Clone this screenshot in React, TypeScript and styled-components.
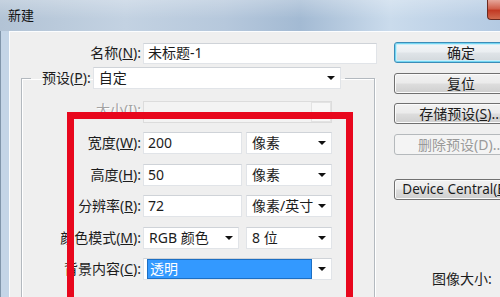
import React from 'react';
import styled, { createGlobalStyle, css } from 'styled-components';

const GlobalStyle = createGlobalStyle`
  html, body {
    margin: 0;
    padding: 0;
    background: #efefef;
    overflow: hidden;
  }
  body {
    font-family: "Noto Sans", "Noto Sans CJK SC", sans-serif;
    font-size: 14px;
    color: #1c1c1c;
  }
`;

const Window = styled.div`
  position: relative;
  width: 500px;
  height: 297px;
  overflow: hidden;
  display: flex;
  flex-direction: column;
`;

const TitleBar = styled.div`
  height: 31px;
  flex: none;
  display: flex;
  align-items: flex-start;
  padding-left: 8px;
  font-size: 13px;
  line-height: 31px;
  color: #111;
  background:
    linear-gradient(180deg, rgba(255, 255, 255, 0.25), rgba(255, 255, 255, 0) 60%),
    linear-gradient(90deg, #b2c3d5 0%, #c3d2e2 25%, #b6c8dc 45%, #a3bad3 60%, #cadbec 78%, #b4cae2 100%);
`;

const TitleText = styled.span`
  flex: 1;
`;

const CloseButton = styled.div`
  flex: none;
  width: 12px;
  height: 19px;
  border: 1px solid #6b2a20;
  border-top: none;
  border-right: none;
  border-radius: 0 0 0 4px;
  background: linear-gradient(180deg, #e6a69a 0%, #d0604c 45%, #c23a24 55%, #d06a4e 100%);
`;

const Frame = styled.div`
  flex: 1;
  display: flex;
  border-left: 1px solid #8196ab;
`;

const Body = styled.div`
  flex: 1;
  display: flex;
  padding-top: 11px;
  border-left: 8px solid #c4d5e7;
  box-shadow: inset 1px 1px 0 #fbfdff;
  background: #efefef;
`;

const FormPane = styled.div`
  flex: none;
  width: 375px;
  display: flex;
  flex-direction: column;
`;

const Row = styled.div<{ $label: number }>`
  display: grid;
  grid-template-columns: ${(p) => p.$label}px auto;
  column-gap: 2px;
  align-items: center;
  height: 22px;
`;

const Label = styled.label<{ $disabled?: boolean }>`
  text-align: right;
  white-space: nowrap;
  line-height: 20px;
  color: ${(p) => (p.$disabled ? '#a3a3a3' : '#1c1c1c')};
  ${(p) =>
    p.$disabled &&
    css`
      margin-top: -5px;
      text-shadow: 1px 1px 0 #ffffff;
    `}
`;

const TextBox = styled.div<{ $w: number; $h?: number }>`
  box-sizing: border-box;
  width: ${(p) => p.$w}px;
  height: ${(p) => p.$h ?? 22}px;
  padding: 0 4px;
  display: flex;
  align-items: center;
  background: #ffffff;
  border: 1px solid #e1e4e8;
  border-top-color: #cfd3d8;
  line-height: 20px;
  white-space: nowrap;
`;

const SelectBox = styled(TextBox)<{ $disabled?: boolean }>`
  padding: 0 5px 0 3px;
  gap: 4px;
  ${(p) =>
    p.$disabled &&
    css`
      background: #f3f3f3;
      border-color: #dcdcdc;
      padding-right: 0;
    `}
`;

const SelectValue = styled.span<{ $selected?: boolean }>`
  flex: 1;
  height: 18px;
  line-height: 18px;
  padding-left: 2px;
  ${(p) =>
    p.$selected &&
    css`
      background: #3399ff;
      color: #ffffff;
      border: 1px solid #1c6fc4;
      margin-right: 2px;
    `}
`;

const Arrow = styled.span`
  flex: none;
  width: 0;
  height: 0;
  border-left: 4px solid transparent;
  border-right: 4px solid transparent;
  border-top: 4px solid #111;
`;

const DisabledDrop = styled.span`
  flex: none;
  box-sizing: border-box;
  width: 20px;
  height: 20px;
  border: 1px solid #e3e3e3;
  background: #f7f7f7;
`;

const PresetGroup = styled.fieldset`
  box-sizing: border-box;
  width: 354px;
  margin: 3px 0 0 12px;
  padding: 12px 0 40px 0;
  border: 1px solid #b3b9bf;
  box-shadow: 1px 1px 0 #ffffff, inset 1px 1px 0 #ffffff;
`;

const Legend = styled.legend`
  margin-left: 9px;
  padding: 0 4px 0 11px;
`;

const LegendInner = styled.div`
  display: flex;
  align-items: center;
  gap: 2px;
`;

const Rows = styled.div`
  display: flex;
  flex-direction: column;
  gap: 9.4px;
`;

const FieldGroup = styled.div<{ $gap?: number }>`
  display: flex;
  gap: ${(p) => p.$gap ?? 4}px;
`;

const ButtonPane = styled.div`
  flex: none;
  display: flex;
  flex-direction: column;
  padding-left: 10px;
  gap: 9.5px;
`;

const Button = styled.div<{ $default?: boolean; $disabled?: boolean; $space?: number; $small?: boolean }>`
  box-sizing: border-box;
  width: 134px;
  height: 21px;
  margin-top: ${(p) => p.$space ?? 0}px;
  display: flex;
  align-items: center;
  justify-content: center;
  white-space: nowrap;
  line-height: 19px;
  font-size: ${(p) => (p.$small ? 13.5 : 14)}px;
  border: 1px solid #707070;
  border-radius: 3px;
  background: linear-gradient(180deg, #f2f2f2 0%, #ebebeb 48%, #dddddd 52%, #cfcfcf 100%);
  box-shadow: inset 0 0 0 1px #fbfbfb;
  ${(p) =>
    p.$default &&
    css`
      border-color: #3c8db8;
      box-shadow: inset 0 0 0 1px #74d6f2, inset 0 0 0 2px #c9eefa;
      background: linear-gradient(180deg, #f3f6f8 0%, #eaeef1 48%, #dfe4e8 52%, #d2d8dc 100%);
    `}
  ${(p) =>
    p.$disabled &&
    css`
      border-color: #b5b9bc;
      background: #f4f4f4;
      color: #9a9a9a;
      box-shadow: none;
    `}
`;

const SizeCaption = styled.div`
  margin: 59px 0 0 38px;
  line-height: 20px;
  white-space: nowrap;
`;

const Highlight = styled.div`
  position: absolute;
  left: 67px;
  top: 112px;
  width: 286px;
  height: 220px;
  box-sizing: border-box;
  border: 7px solid #e8071d;
  pointer-events: none;
`;

export default function App() {
  return (
    <>
      <GlobalStyle />
      <Window>
        <TitleBar>
          <TitleText>新建</TitleText>
          <CloseButton />
        </TitleBar>
        <Frame>
          <Body>
            <FormPane>
              <Row $label={132}>
                <Label>
                  名称(<u>N</u>):
                </Label>
                <TextBox $w={234} $h={21}>未标题-1</TextBox>
              </Row>
              <PresetGroup>
                <Legend>
                  <LegendInner>
                    <Label>
                      预设(<u>P</u>):
                    </Label>
                    <SelectBox $w={248}>
                      <SelectValue>自定</SelectValue>
                      <Arrow />
                    </SelectBox>
                  </LegendInner>
                </Legend>
                <Rows>
                  <Row $label={119}>
                    <Label $disabled>
                      大小(<u>I</u>):
                    </Label>
                    <SelectBox $w={189} $disabled>
                      <SelectValue />
                      <DisabledDrop />
                    </SelectBox>
                  </Row>
                  <Row $label={119}>
                    <Label>
                      宽度(<u>W</u>):
                    </Label>
                    <FieldGroup>
                      <TextBox $w={99}>200</TextBox>
                      <SelectBox $w={86}>
                        <SelectValue>像素</SelectValue>
                        <Arrow />
                      </SelectBox>
                    </FieldGroup>
                  </Row>
                  <Row $label={119}>
                    <Label>
                      高度(<u>H</u>):
                    </Label>
                    <FieldGroup>
                      <TextBox $w={99}>50</TextBox>
                      <SelectBox $w={86}>
                        <SelectValue>像素</SelectValue>
                        <Arrow />
                      </SelectBox>
                    </FieldGroup>
                  </Row>
                  <Row $label={119}>
                    <Label>
                      分辨率(<u>R</u>):
                    </Label>
                    <FieldGroup>
                      <TextBox $w={99}>72</TextBox>
                      <SelectBox $w={86}>
                        <SelectValue>像素/英寸</SelectValue>
                        <Arrow />
                      </SelectBox>
                    </FieldGroup>
                  </Row>
                  <Row $label={119}>
                    <Label>
                      颜色模式(<u>M</u>):
                    </Label>
                    <FieldGroup $gap={7}>
                      <SelectBox $w={96}>
                        <SelectValue>RGB 颜色</SelectValue>
                        <Arrow />
                      </SelectBox>
                      <SelectBox $w={86}>
                        <SelectValue>8 位</SelectValue>
                        <Arrow />
                      </SelectBox>
                    </FieldGroup>
                  </Row>
                  <Row $label={119}>
                    <Label>
                      背景内容(<u>C</u>):
                    </Label>
                    <SelectBox $w={189}>
                      <SelectValue $selected>透明</SelectValue>
                      <Arrow />
                    </SelectBox>
                  </Row>
                </Rows>
              </PresetGroup>
            </FormPane>
            <ButtonPane>
              <Button $default>确定</Button>
              <Button>复位</Button>
              <Button>
                存储预设(<u>S</u>)...
              </Button>
              <Button $disabled>删除预设(D)...</Button>
              <Button $space={15} $small>
                Device Central(<u>E</u>)...
              </Button>
              <SizeCaption>图像大小:</SizeCaption>
            </ButtonPane>
          </Body>
        </Frame>
        <Highlight />
      </Window>
    </>
  );
}
